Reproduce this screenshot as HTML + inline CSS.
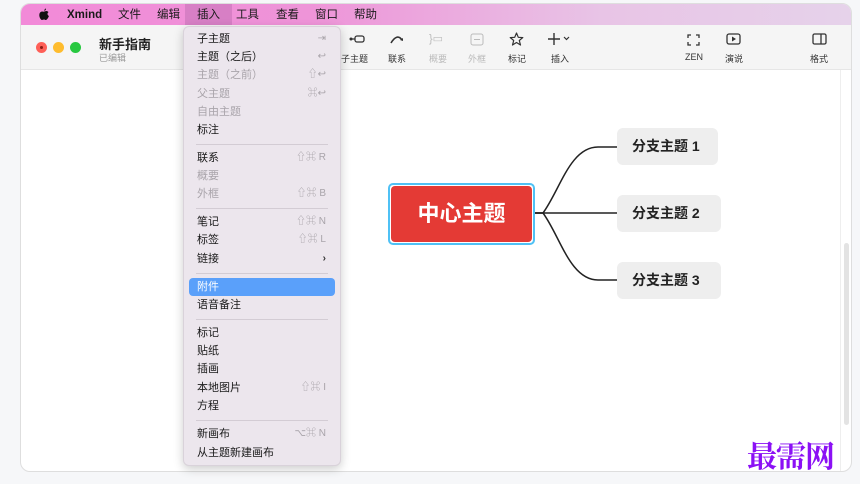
<!DOCTYPE html>
<html><head><meta charset="utf-8">
<style>
*{margin:0;padding:0;box-sizing:border-box}
body{width:860px;height:484px;background:#f6f7f9;position:relative;overflow:hidden;font-family:"Liberation Sans","Noto Sans CJK SC",sans-serif;}
.win{position:absolute;left:20px;top:3px;width:832px;height:469px;border-radius:10px;background:#fff;border:1px solid #dedede;overflow:hidden}
.mb{position:absolute;left:0;top:0;width:100%;height:21px;background:linear-gradient(90deg,#f28ad8 0%,#ee94d8 35%,#e8c4e6 70%,#e6d2ea 100%);font-size:11.5px;color:#1a1a1a}
.mb span{position:absolute;top:2px}
.tb{position:absolute;left:0;top:21px;width:100%;height:45px;background:#f5f5f5;border-bottom:1px solid #e6e6e6}
.dot{position:absolute;top:17px;width:11px;height:11px;border-radius:50%}
.ti{position:absolute;font-size:9px;color:#333;text-align:center}
.menu{position:absolute;left:183px;top:26px;width:158px;height:440px;background:#ece6ed;border-radius:6px;box-shadow:0 3px 10px rgba(0,0,0,.2);border:1px solid #d9d2da;font-size:11px;color:#1a1a1a}
.it{position:absolute;left:13px;height:18px;line-height:18px}
.g{color:#a9a4aa}
.sc{position:absolute;right:14px;font-size:10px;color:#a9a4aa;height:18px;line-height:18px}
.sep{position:absolute;left:12px;right:12px;height:1px;background:#d3ccd4}
.node{position:absolute;background:#eeeeee;border-radius:6px;font-size:14px;font-weight:bold;color:#222;line-height:37px;padding-left:15px}
</style></head><body>
<div class="win">
 <div class="mb">
  <svg style="position:absolute;left:17px;top:4px" width="12" height="13" viewBox="0 0 12 14"><path d="M8.2 0.5C8.3 1.6 7.5 2.9 6.3 3C6.2 1.9 7 0.7 8.2 0.5Z M6.2 3.8C7 3.8 7.6 3.2 8.6 3.2C9.5 3.2 10.4 3.7 10.9 4.5C9.2 5.4 9.5 7.9 11.3 8.6C10.9 9.8 10.1 11.2 9.2 12.3C8.5 13.1 7.8 13 7 12.6C6.2 12.3 5.6 12.3 4.8 12.7C3.9 13.1 3.3 13 2.7 12.3C0.5 9.7 0.3 5.8 2.4 4.3C3.5 3.5 4.6 3.7 5.3 4C5.7 4.1 5.9 3.8 6.2 3.8Z" fill="#111"/></svg>
  <span style="left:46px;font-weight:bold;top:5px">Xmind</span>
  <span style="left:97px">文件</span>
  <span style="left:136px">编辑</span>
  <div style="position:absolute;left:164px;top:0;width:47px;height:21px;background:#d77fc5"></div>
  <span style="left:176px">插入</span>
  <span style="left:215px">工具</span>
  <span style="left:255px">查看</span>
  <span style="left:294px">窗口</span>
  <span style="left:333px">帮助</span>
 </div>
 <div class="tb">
  <div class="dot" style="left:15px;background:#fe5f57"><div style="width:3px;height:3px;background:#8c1a13;border-radius:50%;margin:4px"></div></div>
  <div class="dot" style="left:32px;background:#febc2e"></div>
  <div class="dot" style="left:49px;background:#28c840"></div>
  <div style="position:absolute;left:78px;top:9px;font-size:13px;font-weight:bold;color:#222">新手指南</div>
  <div style="position:absolute;left:78px;top:26px;font-size:9px;color:#999">已编辑</div>
  <svg style="position:absolute;left:326px;top:8px" width="20" height="12"><circle cx="4" cy="6" r="1.5" fill="#333"/><line x1="4" y1="6" x2="8" y2="6" stroke="#333" stroke-width="1.3"/><rect x="8" y="3" width="9" height="6" rx="2" fill="none" stroke="#333" stroke-width="1.3"/></svg>
  <div class="ti" style="left:320px;top:27px">子主题</div>
  <svg style="position:absolute;left:368px;top:8px" width="16" height="12"><path d="M2 10 Q8 0 13 7" fill="none" stroke="#333" stroke-width="1.6"/><path d="M11 7 L14 8 L14 5" fill="#333"/></svg>
  <div class="ti" style="left:367px;top:27px">联系</div>
  <div class="ti" style="left:408px;top:7px;color:#bbb;font-size:11px">}▭</div>
  <div class="ti" style="left:408px;top:27px;color:#bbb">概要</div>
  <svg style="position:absolute;left:449px;top:8px" width="14" height="13"><rect x="1" y="1" width="12" height="11" rx="2" fill="none" stroke="#bbb"/><line x1="4" y1="6.5" x2="10" y2="6.5" stroke="#bbb"/></svg>
  <div class="ti" style="left:447px;top:27px;color:#bbb">外框</div>
  <svg style="position:absolute;left:488px;top:7px" width="15" height="15" viewBox="0 0 15 15"><path d="M7.5 1L9.3 5.3L13.8 5.6L10.3 8.5L11.5 13L7.5 10.5L3.5 13L4.7 8.5L1.2 5.6L5.7 5.3Z" fill="none" stroke="#333" stroke-width="1.2" stroke-linejoin="round"/></svg>
  <div class="ti" style="left:487px;top:27px">标记</div>
  <svg style="position:absolute;left:526px;top:7px" width="24" height="14"><path d="M7 1V13M1 7H13" stroke="#333" stroke-width="1.4"/><path d="M17 5L19.5 7.5L22 5" fill="none" stroke="#333" stroke-width="1.2"/></svg>
  <div class="ti" style="left:530px;top:27px">插入</div>
  <svg style="position:absolute;left:666px;top:9px" width="13" height="12"><path d="M1 4V1H4M9 1H12V4M12 8V11H9M4 11H1V8" fill="none" stroke="#333" stroke-width="1.3"/></svg>
  <div class="ti" style="left:664px;top:27px">ZEN</div>
  <svg style="position:absolute;left:705px;top:8px" width="15" height="13"><rect x="1" y="1" width="13" height="10" rx="2" fill="none" stroke="#333" stroke-width="1.3"/><path d="M6 3.5L10 6L6 8.5Z" fill="#333"/></svg>
  <div class="ti" style="left:704px;top:27px">演说</div>
  <svg style="position:absolute;left:791px;top:8px" width="15" height="13"><rect x="1" y="1" width="13" height="10" rx="1.5" fill="none" stroke="#333" stroke-width="1.3"/><line x1="9" y1="1" x2="9" y2="11" stroke="#333" stroke-width="1.3"/></svg>
  <div class="ti" style="left:789px;top:27px">格式</div>
 </div>
 <div style="position:absolute;left:819px;top:66px;width:1px;height:403px;background:#eee"></div>
 <div style="position:absolute;left:823px;top:239px;width:5px;height:182px;background:#e3e3e3;border-radius:3px"></div>
</div>

<svg style="position:absolute;left:0;top:0" width="860" height="484">
 <path d="M534 213 H543 C560 190 570 147 598 147 H617" fill="none" stroke="#222" stroke-width="1.5"/>
 <path d="M534 213 H617" fill="none" stroke="#222" stroke-width="1.5"/>
 <path d="M534 213 H543 C560 236 570 280 598 280 H617" fill="none" stroke="#222" stroke-width="1.5"/>
</svg>
<div style="position:absolute;left:388px;top:183px;width:147px;height:62px;border:2px solid #4fc1f5;border-radius:5px;background:#fff"></div>
<div style="position:absolute;left:391px;top:186px;width:141px;height:56px;background:#e43a35;border-radius:4px;color:#fff;font-size:22px;font-weight:bold;text-align:center;line-height:56px">中心主题</div>
<div class="node" style="left:617px;top:128px;width:101px;height:37px">分支主题 1</div>
<div class="node" style="left:617px;top:195px;width:104px;height:37px">分支主题 2</div>
<div class="node" style="left:617px;top:262px;width:104px;height:37px">分支主题 3</div>

<div style="position:absolute;left:747px;top:432px;font-family:'Liberation Serif','Noto Serif CJK SC',serif;font-weight:bold;font-size:30px;color:#8b10f5;letter-spacing:-1px">最需网</div>

<div class="menu">
 <div class="it" style="top:3px">子主题</div><div class="sc" style="top:3px">⇥</div>
 <div class="it" style="top:21px">主题（之后）</div><div class="sc" style="top:21px">↩</div>
 <div class="it g" style="top:39px">主题（之前）</div><div class="sc" style="top:39px">⇧↩</div>
 <div class="it g" style="top:58px">父主题</div><div class="sc" style="top:58px">⌘↩</div>
 <div class="it g" style="top:76px">自由主题</div>
 <div class="it" style="top:94px">标注</div>
 <div class="sep" style="top:117px"></div>
 <div class="it" style="top:122px">联系</div><div class="sc" style="top:122px">⇧⌘ R</div>
 <div class="it g" style="top:140px">概要</div>
 <div class="it g" style="top:158px">外框</div><div class="sc" style="top:158px">⇧⌘ B</div>
 <div class="sep" style="top:181px"></div>
 <div class="it" style="top:186px">笔记</div><div class="sc" style="top:186px">⇧⌘ N</div>
 <div class="it" style="top:204px">标签</div><div class="sc" style="top:204px">⇧⌘ L</div>
 <div class="it" style="top:223px">链接</div><div class="sc" style="top:223px;color:#333;font-weight:bold">›</div>
 <div class="sep" style="top:246px"></div>
 <div style="position:absolute;left:5px;right:5px;top:251px;height:18px;background:#5aa0fa;border-radius:4px"></div>
 <div class="it" style="top:251px;color:#fff">附件</div>
 <div class="it" style="top:269px">语音备注</div>
 <div class="sep" style="top:292px"></div>
 <div class="it" style="top:297px">标记</div>
 <div class="it" style="top:315px">贴纸</div>
 <div class="it" style="top:333px">插画</div>
 <div class="it" style="top:352px">本地图片</div><div class="sc" style="top:352px">⇧⌘ I</div>
 <div class="it" style="top:370px">方程</div>
 <div class="sep" style="top:393px"></div>
 <div class="it" style="top:398px">新画布</div><div class="sc" style="top:398px">⌥⌘ N</div>
 <div class="it" style="top:417px">从主题新建画布</div>
</div>
</body></html>
